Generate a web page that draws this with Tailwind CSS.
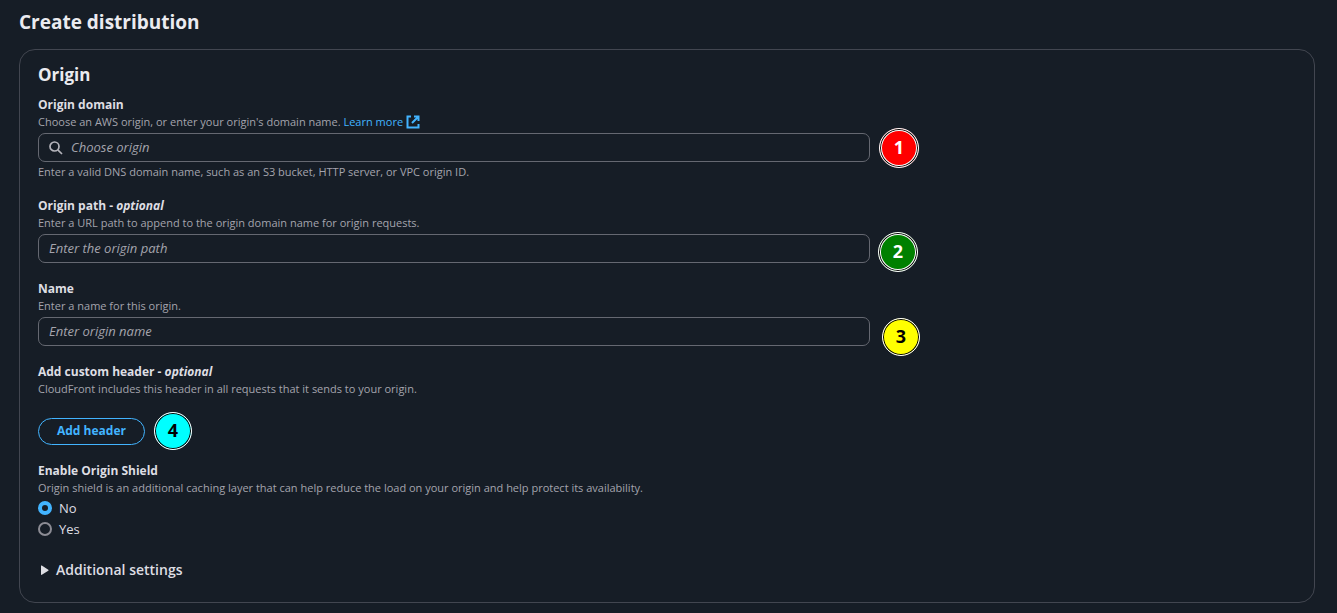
<!DOCTYPE html>
<html lang="en">
<head>
    <meta charset="UTF-8">
    <meta name="viewport" content="width=device-width, initial-scale=1.0">
    <title>Create distribution</title>
    <script src="https://cdn.jsdelivr.net/npm/@tailwindcss/browser@4"></script>
</head>
<body class="min-h-screen bg-[#161d26] font-['Open_Sans','Noto_Sans',sans-serif] text-[13px] leading-[18px] text-[#dedee3]">

    <main class="pl-[19px] pr-[22px] pt-2 pb-2">
        <h1 class="text-[19px] leading-7 font-bold text-[#ebebf0]">Create distribution</h1>

        <!-- Origin -->
        <section class="mt-[13px] rounded-2xl border border-[#424650] px-[18px] pt-[13px] pb-[21px]">
            <h2 class="text-[17px] leading-6 font-bold text-[#ebebf0]">Origin</h2>

            <form class="mt-[9px]">
                <div class="grid grid-cols-3 gap-x-5">
                    <div class="col-span-2 flex flex-col gap-[17px]">

                        <!-- Origin domain -->
                        <div>
                            <label for="originDomain" class="block text-xs leading-[18px] font-bold">Origin domain</label>
                            <p class="text-[11px] leading-4 text-[#a4a4ad]">
                                Choose an AWS origin, or enter your origin's domain name.
                                <a href="#" class="text-[#42b4ff]">Learn more
                                    <svg class="inline size-[14px] align-[-3px]" viewBox="0 0 14 14" fill="none" stroke="currentColor" stroke-width="2">
                                        <path d="M5 1.500H1.500v11h11V9" />
                                        <path d="M8 1.500h4.500V6M12.500 1.500 6 8" />
                                    </svg>
                                </a>
                            </p>
                            <div class="relative mt-[3px]">
                                <svg class="absolute left-[11px] top-2 size-[14px] text-[#b4b4bb]" viewBox="0 0 14 14" fill="none" stroke="currentColor" stroke-width="1.700">
                                    <circle cx="5.500" cy="5.500" r="4.500" />
                                    <path d="m8.800 8.800 4.200 4.200" />
                                </svg>
                                <input id="originDomain" type="text" placeholder="Choose origin" class="block h-[29px] w-full rounded-[7px] border border-[#656871] pl-8 pr-[10px] pb-[2px] placeholder:italic placeholder:text-[#a4a4ad]">
                                <span class="absolute left-full top-1/2 ml-[9px] flex size-10 -translate-y-1/2 items-center justify-center rounded-full border border-white bg-[red] pb-[2px] text-lg font-bold text-white shadow-[inset_0_0_0_1px_black,inset_0_0_0_2px_white]">1</span>
                            </div>
                            <p class="mt-[2px] text-[11px] leading-4 text-[#a4a4ad]">Enter a valid DNS domain name, such as an S3 bucket, HTTP server, or VPC origin ID.</p>
                        </div>

                        <!-- Origin path -->
                        <div>
                            <label for="originPath" class="block text-xs leading-[18px] font-bold">Origin path - <i>optional</i></label>
                            <p class="text-[11px] leading-4 text-[#a4a4ad]">Enter a URL path to append to the origin domain name for origin requests.</p>
                            <div class="relative mt-[3px]">
                                <input id="originPath" type="text" placeholder="Enter the origin path" class="block h-[29px] w-full rounded-[7px] border border-[#656871] px-[10px] pb-[2px] placeholder:italic placeholder:text-[#a4a4ad]">
                                <span class="absolute left-full -top-[2px] ml-2 flex size-10 items-center justify-center rounded-full border border-white bg-[green] pb-[2px] text-lg font-bold text-white shadow-[inset_0_0_0_1px_black,inset_0_0_0_2px_white]">2</span>
                            </div>
                        </div>

                        <!-- Name -->
                        <div>
                            <label for="originName" class="block text-xs leading-[18px] font-bold">Name</label>
                            <p class="text-[11px] leading-4 text-[#a4a4ad]">Enter a name for this origin.</p>
                            <div class="relative mt-[3px]">
                                <input id="originName" type="text" placeholder="Enter origin name" class="block h-[29px] w-full rounded-[7px] border border-[#656871] px-[10px] pb-[2px] placeholder:italic placeholder:text-[#a4a4ad]">
                                <span class="absolute left-full top-px ml-3 flex size-[38px] items-center justify-center rounded-full border border-white bg-[yellow] pb-[2px] text-lg font-bold text-black inset-ring inset-ring-black">3</span>
                            </div>
                        </div>

                        <!-- Custom header -->
                        <div>
                            <h3 class="text-xs leading-[18px] font-bold">Add custom header - <i>optional</i></h3>
                            <p class="text-[11px] leading-4 text-[#a4a4ad]">CloudFront includes this header in all requests that it sends to your origin.</p>
                            <div class="relative mt-[21px] w-fit">
                                <button type="button" class="block h-[27px] rounded-full border border-[#42b4ff] px-[18px] pb-[2px] text-xs font-bold text-[#42b4ff]">Add header</button>
                                <span class="absolute left-full -top-[6px] ml-[9px] flex size-[38px] items-center justify-center rounded-full border border-white bg-[cyan] pb-[2px] text-lg font-bold text-black inset-ring inset-ring-black">4</span>
                            </div>
                        </div>

                        <!-- Origin Shield -->
                        <fieldset>
                            <legend class="text-xs leading-[18px] font-bold">Enable Origin Shield</legend>
                            <p class="text-[11px] leading-4 text-[#a4a4ad]">Origin shield is an additional caching layer that can help reduce the load on your origin and help protect its availability.</p>
                            <div class="mt-[3px] flex flex-col gap-[3px]">
                                <label class="flex items-center gap-[7px]">
                                    <input type="radio" name="originShield" value="no" checked class="size-[14px] appearance-none rounded-full border-2 border-[#8c8c94] checked:border-4 checked:border-[#42b4ff]">
                                    No
                                </label>
                                <label class="flex items-center gap-[7px]">
                                    <input type="radio" name="originShield" value="yes" class="size-[14px] appearance-none rounded-full border-2 border-[#8c8c94] checked:border-4 checked:border-[#42b4ff]">
                                    Yes
                                </label>
                            </div>
                        </fieldset>
                    </div>
                </div>

                <!-- Additional settings -->
                <button type="button" aria-expanded="false" class="mt-[21px] flex items-center text-sm leading-[22px] font-semibold">
                    <svg class="mr-1 size-[14px]" viewBox="0 0 14 14" fill="currentColor">
                        <path d="M3 3v8.400a.5.5 0 0 0 .8.4l6.500-4.100a.5.5 0 0 0 0-.9L3.800 2.600a.5.5 0 0 0-.8.4z" />
                    </svg>
                    Additional settings
                </button>
            </form>
        </section>
    </main>

</body>
</html>
